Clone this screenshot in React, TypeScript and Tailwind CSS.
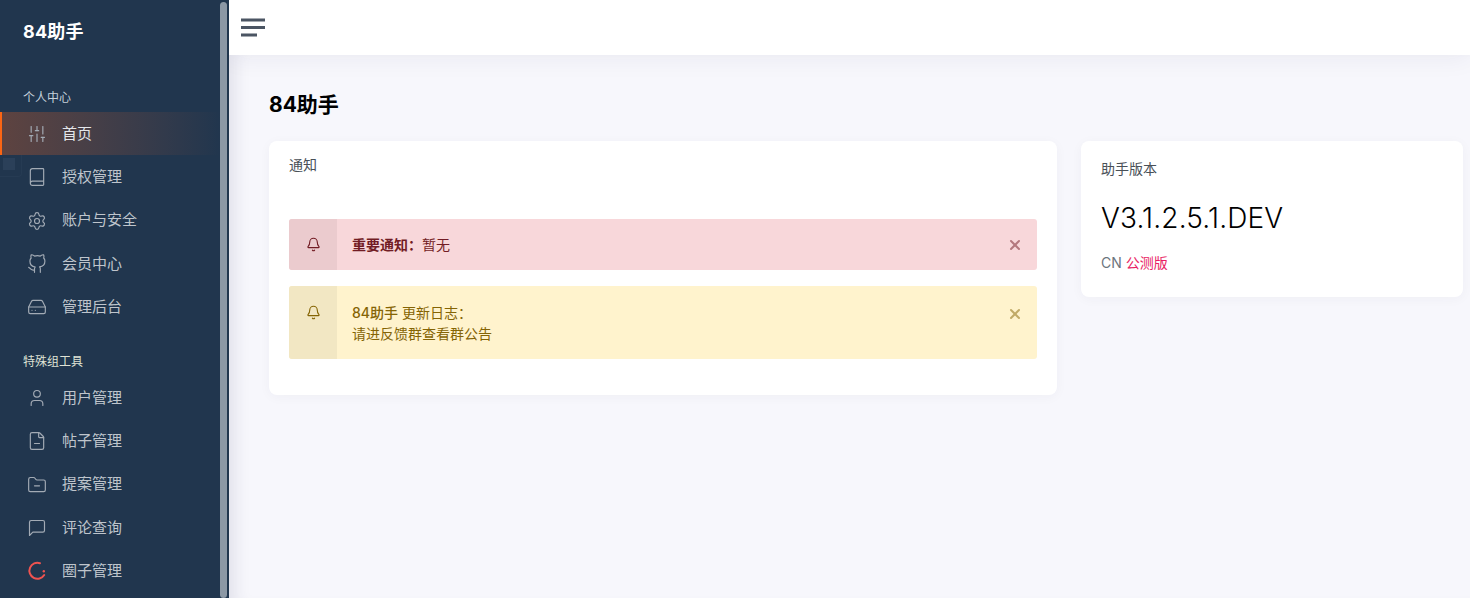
import React from 'react';
import {
  SlidersVertical,
  Book,
  Settings,
  HardDrive,
  User,
  FileMinus,
  FolderMinus,
  Bell,
  X,
} from 'lucide-react';

const font = { fontFamily: 'Inter, "Noto Sans CJK SC", sans-serif' };

type IconProps = { size?: number; strokeWidth?: number; className?: string };

const GithubIcon = ({ size = 20, strokeWidth = 1.5, className }: IconProps) => (
  <svg width={size} height={size} viewBox="0 0 24 24" fill="none" stroke="currentColor" strokeWidth={strokeWidth} strokeLinecap="round" strokeLinejoin="round" className={className}>
    <path d="M9 19c-5 1.5-5-2.5-7-3m14 6v-3.87a3.37 3.37 0 0 0-.94-2.61c3.14-.35 6.44-1.54 6.44-7A5.44 5.44 0 0 0 20 4.77 5.07 5.07 0 0 0 19.91 1S18.73.65 16 2.48a13.38 13.38 0 0 0-7 0C6.27.65 5.09 1 5.09 1A5.07 5.07 0 0 0 5 4.77a5.44 5.44 0 0 0-1.5 3.78c0 5.42 3.3 6.61 6.44 7A3.37 3.37 0 0 0 9 18.13V22" />
  </svg>
);

const MessageIcon = ({ size = 20, strokeWidth = 1.5, className }: IconProps) => (
  <svg width={size} height={size} viewBox="0 0 24 24" fill="none" stroke="currentColor" strokeWidth={strokeWidth} strokeLinecap="round" strokeLinejoin="round" className={className}>
    <path d="M21 15a2 2 0 0 1-2 2H7l-4 4V5a2 2 0 0 1 2-2h14a2 2 0 0 1 2 2z" />
  </svg>
);

const Spinner = () => (
  <svg width="20" height="20" viewBox="0 0 20 20" fill="none" className="shrink-0">
    <path d="M13 2.2A8 8 0 1 0 17.2 14" stroke="#ef5350" strokeWidth="2" strokeLinecap="round" />
    <circle cx="16.8" cy="10.2" r="1.2" fill="#ef5350" />
  </svg>
);

const personal = [
  { label: '首页', icon: SlidersVertical, active: true },
  { label: '授权管理', icon: Book },
  { label: '账户与安全', icon: Settings },
  { label: '会员中心', icon: GithubIcon },
  { label: '管理后台', icon: HardDrive },
];

const special = [
  { label: '用户管理', icon: User },
  { label: '帖子管理', icon: FileMinus },
  { label: '提案管理', icon: FolderMinus },
  { label: '评论查询', icon: MessageIcon },
  { label: '圈子管理', icon: null },
];

type Item = { label: string; icon: React.ElementType | null; active?: boolean };

const NavItem = ({ item }: { item: Item }) => {
  const Icon = item.icon;
  return (
    <div
      className={`flex h-[43.3px] items-center gap-[15px] pt-[2px] text-[15px] ${
        item.active
          ? 'border-l-2 border-[#fb6514] bg-gradient-to-r from-[#5e4340] to-[#21364e] pl-[25px] text-[#e4e6ea]'
          : 'pl-[27px] text-[#bfc5cc]'
      }`}
    >
      {Icon ? <Icon size={20} strokeWidth={1.4} className="shrink-0 text-[#a3abb5]" /> : <Spinner />}
      <span>{item.label}</span>
    </div>
  );
};

const Alert = ({
  tone,
  children,
}: {
  tone: 'red' | 'yellow';
  children: React.ReactNode;
}) => {
  const red = tone === 'red';
  return (
    <div
      className={`flex rounded-[3px] text-sm leading-[21px] ${
        red ? 'h-[51px] bg-[#f8d7da] text-[#721c24]' : 'h-[73px] bg-[#fff3cd] text-[#856404]'
      }`}
    >
      <div
        className={`flex w-12 shrink-0 justify-center rounded-l-[3px] ${
          red ? 'items-center bg-[#ebcbce]' : 'bg-[#f2e7c3] pt-[19px]'
        }`}
      >
        <Bell size={15} strokeWidth={1.8} />
      </div>
      <div className="flex flex-1 items-center pl-[15px]">
        <div>{children}</div>
      </div>
      <div className={`flex w-[44px] justify-center ${red ? 'items-center' : 'pt-[20px]'}`}>
        <X size={16} strokeWidth={3} className="opacity-50" />
      </div>
    </div>
  );
};

export default function App() {
  return (
    <div className="flex h-[598px] overflow-hidden bg-[#f7f7fc]" style={font}>
      {/* sidebar */}
      <aside className="relative z-10 flex h-full w-[229px] shrink-0 overflow-hidden bg-[#21364e]">
        <div className="min-w-0 flex-1">
          <div className="pl-[23px] pt-[20px] text-lg leading-6 font-bold tracking-[0.2px] text-white">84助手</div>
          <div className="pl-[23px] pt-[44px] pb-[3.5px] text-xs leading-[20px] text-[#c4d0da]">个人中心</div>
          {personal.map((item) => (
            <NavItem key={item.label} item={item} />
          ))}
          <div className="pl-[23px] pt-[24.5px] pb-[3px] text-xs leading-[20px] text-[#dfe2d5]">特殊组工具</div>
          {special.map((item) => (
            <NavItem key={item.label} item={item} />
          ))}
        </div>
        <div className="mr-[2px] mt-[2px] w-[7px] rounded-full bg-[#8c98a5]" />
        <div className="absolute left-0 top-[155px] h-[22px] w-[22px] rounded-br-[4px] border-r border-b border-[#263b53]">
          <div className="ml-[3px] mt-[3px] h-[12px] w-[12px] bg-[#2b4059]" />
        </div>
      </aside>

      {/* main */}
      <div className="flex min-w-0 flex-1 flex-col">
        <header className="relative z-[5] flex h-[55px] shrink-0 items-center bg-white pl-3 shadow-[0_4px_24px_rgba(40,40,80,0.06)]">
          <svg width="24" height="20" viewBox="0 0 24 20" fill="none">
            <path d="M0 2h24M0 9.5h24M0 17h16" stroke="#4b5563" strokeWidth="3" />
          </svg>
        </header>
        <main className="flex-1 pl-10 pr-[7px] pt-[36px] shadow-[inset_18px_0_16px_-12px_rgba(40,40,80,0.1)]">
          <h1 className="mb-[22px] text-[21px] leading-[28px] font-bold text-black">84助手</h1>
          <div className="flex items-start gap-6">
            <section className="h-[254px] w-[788px] shrink-0 rounded-lg bg-white px-5 pt-[14px] shadow-[0_2px_12px_rgba(40,40,80,0.04)]">
              <div className="mb-[44px] text-sm leading-[20px] text-[#495057]">通知</div>
              <div className="flex flex-col gap-4">
                <Alert tone="red">
                  <span className="font-semibold">重要通知：</span>暂无
                </Alert>
                <Alert tone="yellow">
                  <span className="font-medium">84助手</span> 更新日志：
                  <br />
                  请进反馈群查看群公告
                </Alert>
              </div>
            </section>
            <section className="h-[156px] min-w-0 flex-1 rounded-lg bg-white px-5 pt-[18px] shadow-[0_2px_12px_rgba(40,40,80,0.04)]">
              <div className="text-sm leading-[20px] text-[#495057]">助手版本</div>
              <div className="mt-[21px] text-[28px] leading-[36px] font-light tracking-[0.15px] text-black">V3.1.2.5.1.DEV</div>
              <div className="mt-[17px] text-sm leading-[20px] text-[#6c757d]">
                CN <span className="text-[#e91e63]">公测版</span>
              </div>
            </section>
          </div>
        </main>
      </div>
    </div>
  );
}
